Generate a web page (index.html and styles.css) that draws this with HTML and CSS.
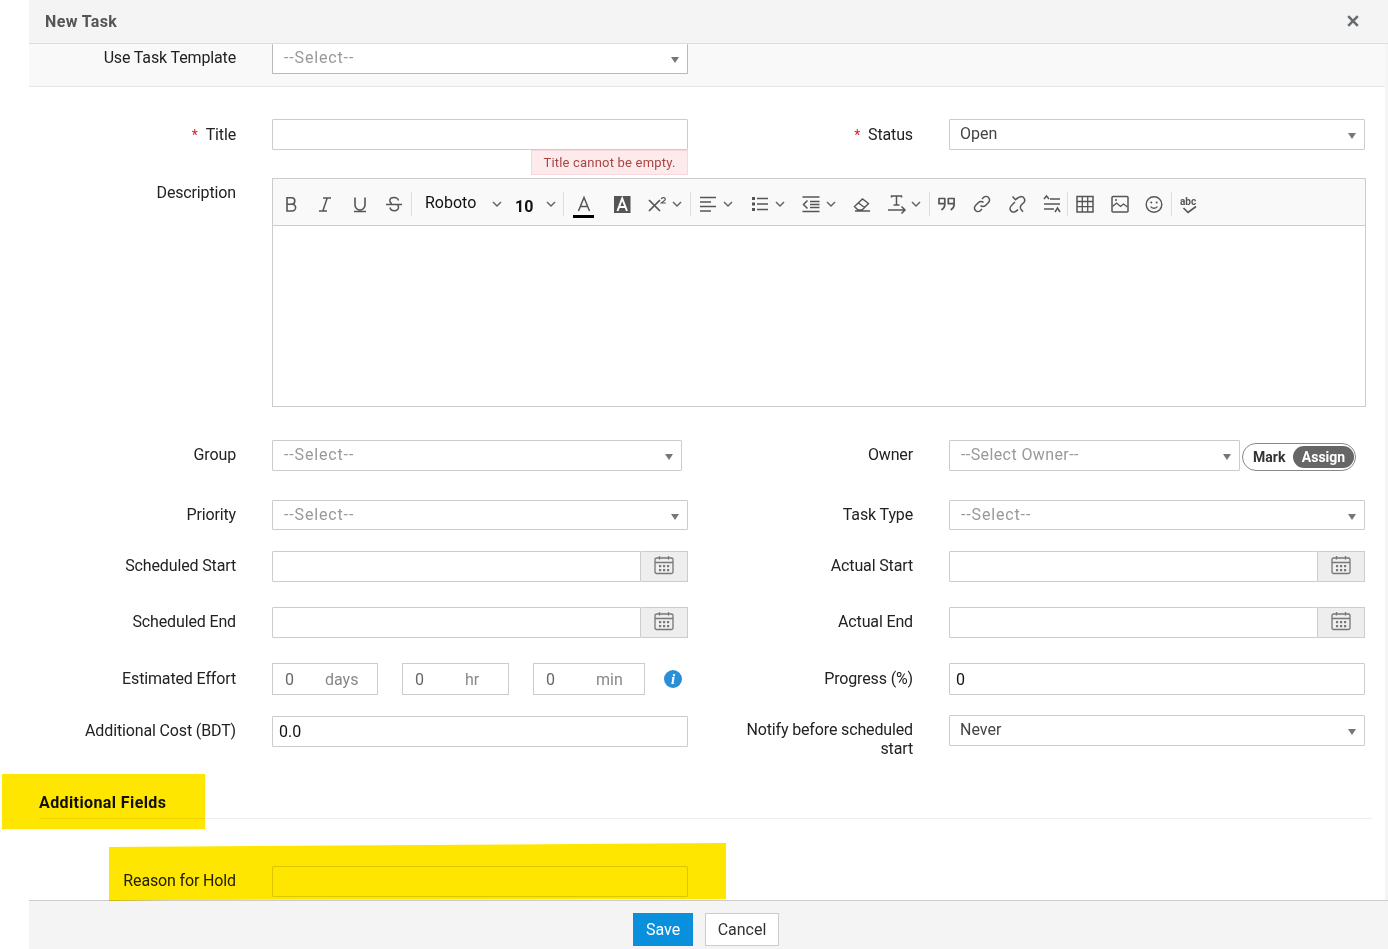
FILE: index.html
```html
<!DOCTYPE html>
<html lang="en">
<head>
<meta charset="utf-8">
<title>New Task</title>
<link rel="stylesheet" href="styles.css">
</head>
<body>
<svg class="defs" width="0" height="0" aria-hidden="true">
  <symbol id="chev" viewBox="0 0 10 10"><path d="M1 3l4 4 4-4" fill="none" stroke="#666" stroke-width="1.5"/></symbol>
  <symbol id="cal" viewBox="0 0 20 20"><g fill="none" stroke="#777" stroke-width="1.3"><rect x="1" y="3" width="18" height="15.5" rx="1.5"/><path d="M1 7.5h18M5.5 1v3.5M14.5 1v3.5"/></g><g fill="#777"><rect x="5" y="10" width="2.2" height="2.2"/><rect x="9" y="10" width="2.2" height="2.2"/><rect x="13" y="10" width="2.2" height="2.2"/><rect x="5" y="14" width="2.2" height="2.2"/><rect x="9" y="14" width="2.2" height="2.2"/><rect x="13" y="14" width="2.2" height="2.2"/></g></symbol>
</svg>
<div class="page">
  <div class="modal">
    <header class="head">
      <h1 class="head-title">New Task</h1>
      <svg class="close" width="12" height="12" viewBox="0 0 12 12"><path d="M1.2 1.2l9.6 9.6M10.8 1.2l-9.6 9.6" stroke="#666c70" stroke-width="2.6"/></svg>
    </header>
    <div class="body">
      <section class="template">
        <div class="row">
          <label class="lbl lbl-top">Use Task Template</label>
          <div class="select select-dark fld"><span class="ph">--Select--</span><i class="arrow"></i></div>
        </div>
      </section>

      <div class="row row-title">
        <label class="lbl lbl-low"><b class="req">*</b>Title</label>
        <div class="fld">
          <input class="input" type="text">
          <div class="error">Title cannot be empty.</div>
        </div>
        <label class="lbl lbl-r lbl-low"><b class="req">*</b>Status</label>
        <div class="select fld"><span class="val">Open</span><i class="arrow"></i></div>
      </div>

      <div class="row row-desc">
        <label class="lbl">Description</label>
        <div class="editor">
          <div class="toolbar">
            <span class="tool tool-first"><svg width="20" height="20" viewBox="0 0 20 20"><path d="M6 3.800h4.600a3.200 3.200 0 0 1 0 6.400H6zM6 10.200h5.200a3.400 3.400 0 0 1 0 6.800H6z" fill="none" stroke="#555" stroke-width="1.600"/></svg></span>
            <span class="tool"><svg width="20" height="20" viewBox="0 0 20 20"><path d="M8 4h8M4 17h8M12.200 4L7.800 17" fill="none" stroke="#555" stroke-width="1.500"/></svg></span>
            <span class="tool"><svg width="20" height="20" viewBox="0 0 20 20"><path d="M5 3.500v7.500a5 5 0 0 0 10 0V3.500M4 17.500h12" fill="none" stroke="#555" stroke-width="1.600"/></svg></span>
            <span class="tool"><svg width="20" height="20" viewBox="0 0 20 20"><path d="M14.500 6.500C14 4.500 12.300 3.500 10 3.500 7.500 3.500 5.800 4.800 5.800 6.700c0 1.200.7 2.200 2 2.800M6 13.500c.4 2 2 3.200 4.200 3.200 2.500 0 4.300-1.300 4.300-3.400 0-.9-.3-1.600-.9-2.300M2 10.500h16" fill="none" stroke="#555" stroke-width="1.500"/></svg></span>
            <i class="sep"></i>
            <span class="combo combo-font"><span>Roboto</span><svg class="chev" width="10" height="10"><use href="#chev"/></svg></span>
            <span class="combo combo-size"><b>10</b><svg class="chev" width="10" height="10"><use href="#chev"/></svg></span>
            <i class="sep"></i>
            <span class="tool tool-color"><svg width="20" height="20" viewBox="0 0 20 20"><path d="M4.500 17L10 3.500 15.500 17M6.500 12.500h7" fill="none" stroke="#555" stroke-width="1.500"/></svg><i class="swatch"></i></span>
            <span class="tool tool-bg"><svg width="20" height="20" viewBox="0 0 20 20"><rect x="2" y="2" width="16.500" height="17" fill="#555"/><path d="M5.500 17L10.200 4.500 15 17M7.200 13h6" fill="none" stroke="#fff" stroke-width="2"/></svg></span>
            <span class="split split-x"><svg width="20" height="20" viewBox="0 0 20 20"><path d="M2 6l11 11M13 6L2 17" fill="none" stroke="#555" stroke-width="1.700"/><path d="M14.300 5.200c.3-2 4-2 4 0 0 1.400-2.700 2.300-4 3.800h4.500" fill="none" stroke="#555" stroke-width="1.200"/></svg><svg class="chev" width="10" height="10"><use href="#chev"/></svg></span>
            <i class="sep"></i>
            <span class="split split-wide"><svg width="20" height="20" viewBox="0 0 20 20"><path d="M2 3.500h16M2 8h11M2 12.500h16M2 17h11" fill="none" stroke="#555" stroke-width="1.700"/></svg><svg class="chev" width="10" height="10"><use href="#chev"/></svg></span>
            <span class="split split-in"><svg width="20" height="20" viewBox="0 0 20 20"><path d="M7 4.500h11M7 10h11M7 15.500h11" fill="none" stroke="#555" stroke-width="1.500"/><path d="M2 3h3v3H2zM2 8.500h3v3H2zM2 14h3v3H2z" fill="#555"/></svg><svg class="chev" width="10" height="10"><use href="#chev"/></svg></span>
            <span class="split split-in"><svg width="20" height="20" viewBox="0 0 20 20"><path d="M1.500 3h17M1.500 17.500h17M9 7.500h9.500M9 10.500h9.500M9 13.500h9.500M6.500 6.500L2.500 10.500l4 4" fill="none" stroke="#555" stroke-width="1.500"/></svg><svg class="chev" width="10" height="10"><use href="#chev"/></svg></span>
            <span class="tool"><svg width="20" height="20" viewBox="0 0 20 20"><path d="M2.500 12.500L10.500 5l6 4.500-6.500 6.500H6zM6.500 9l6 4.500M3 17h15" fill="none" stroke="#555" stroke-width="1.400"/></svg></span>
            <span class="split split-t"><svg width="20" height="20" viewBox="0 0 20 20"><path d="M4.500 3.500V2h10v1.500M9.500 2v9M6.500 11h6M1 16h17M14.500 12.500L18 16l-3.500 3.500" fill="none" stroke="#555" stroke-width="1.500"/></svg><svg class="chev" width="10" height="10"><use href="#chev"/></svg></span>
            <i class="sep"></i>
            <span class="tool"><svg width="20" height="20" viewBox="0 0 20 20"><path d="M2 4.500h5.800v6c0 2.300-1 3.800-2.800 5M2 4.500v5.200h5.800M11.300 4.500h5.800v6c0 2.300-1 3.800-2.800 5M11.300 4.500v5.200h5.800" fill="none" stroke="#555" stroke-width="1.700" stroke-linejoin="round" stroke-linecap="round"/></svg></span>
            <span class="tool"><svg width="20" height="20" viewBox="0 0 20 20"><path d="M8.500 11.500a3.500 3.500 0 0 0 5 0l3-3a3.500 3.500 0 0 0-5-5l-1.500 1.500M11.500 8.500a3.500 3.500 0 0 0-5 0l-3 3a3.500 3.500 0 0 0 5 5l1.500-1.500" fill="none" stroke="#555" stroke-width="1.500"/></svg></span>
            <span class="tool tool-shift"><svg width="20" height="20" viewBox="0 0 20 20"><path d="M4.500 2.500l3 3.200c2.500-2.200 3.500-3.200 5.800-3.200 2.800 0 4.700 3.800 2.400 6.300l-2.200 2c-1 1-1.500 2.700-.6 4.300l2 2.700M7 8C4.500 10.500 2 11.800 2 14.500 2 17 4.200 18.500 6.500 18c1.500-.3 2.500-1.500 3.500-2.500" fill="none" stroke="#555" stroke-width="1.500"/></svg></span>
            <span class="tool tool-shift"><svg width="20" height="20" viewBox="0 0 20 20"><path d="M2 10h16M8 5h10M2 15h10M2 5l2.500-3L7 5M13 18l2.500-4 2.500 4" fill="none" stroke="#555" stroke-width="1.500"/></svg></span>
            <i class="sep"></i>
            <span class="tool"><svg width="20" height="20" viewBox="0 0 20 20"><rect x="2" y="2.500" width="16" height="15.500" fill="none" stroke="#555" stroke-width="1.500"/><path d="M2 7.500h16M2 12.700h16M7.300 2.500V18M12.700 2.500V18" fill="none" stroke="#555" stroke-width="1.300"/></svg></span>
            <span class="tool"><svg width="20" height="20" viewBox="0 0 20 20"><rect x="2" y="2.500" width="16" height="15.500" rx="1" fill="none" stroke="#555" stroke-width="1.500"/><path d="M2.500 12.500L6.500 9l4 3.500 3-2.500 4 3" fill="none" stroke="#555" stroke-width="1.300"/><circle cx="6" cy="6" r="1" fill="#555"/></svg></span>
            <span class="tool"><svg width="20" height="20" viewBox="0 0 20 20"><circle cx="10" cy="10.500" r="7.800" fill="none" stroke="#555" stroke-width="1.400"/><circle cx="7.300" cy="8.500" r="1" fill="#555"/><circle cx="12.700" cy="8.500" r="1" fill="#555"/><path d="M6.500 12.500c1.500 2.300 5.500 2.300 7 0" fill="none" stroke="#555" stroke-width="1.300"/></svg></span>
            <i class="sep"></i>
            <span class="tool"><span class="abc">abc</span><svg class="check" width="16" height="8" viewBox="0 0 16 8"><path d="M1.500 2L6 6.500 14 .5" fill="none" stroke="#555" stroke-width="1.700"/></svg></span>
          </div>
          <div class="editor-area"></div>
        </div>
      </div>

      <div class="row row-group">
        <label class="lbl">Group</label>
        <div class="select fld fld-short"><span class="ph">--Select--</span><i class="arrow"></i></div>
        <label class="lbl lbl-r lbl-r-short">Owner</label>
        <div class="select fld fld-owner"><span class="ph ph-long">--Select Owner--</span><i class="arrow"></i></div>
        <div class="toggle"><span class="toggle-off">Mark</span><span class="toggle-on">Assign</span></div>
      </div>

      <div class="row row-priority">
        <label class="lbl">Priority</label>
        <div class="select fld"><span class="ph">--Select--</span><i class="arrow"></i></div>
        <label class="lbl lbl-r">Task Type</label>
        <div class="select fld"><span class="ph">--Select--</span><i class="arrow"></i></div>
      </div>

      <div class="row row-date1">
        <label class="lbl">Scheduled Start</label>
        <div class="date fld"><span class="date-val"></span><span class="date-btn"><svg width="20" height="20"><use href="#cal"/></svg></span></div>
        <label class="lbl lbl-r">Actual Start</label>
        <div class="date fld"><span class="date-val"></span><span class="date-btn"><svg width="20" height="20"><use href="#cal"/></svg></span></div>
      </div>

      <div class="row row-date2">
        <label class="lbl">Scheduled End</label>
        <div class="date fld"><span class="date-val"></span><span class="date-btn"><svg width="20" height="20"><use href="#cal"/></svg></span></div>
        <label class="lbl lbl-r">Actual End</label>
        <div class="date fld"><span class="date-val"></span><span class="date-btn"><svg width="20" height="20"><use href="#cal"/></svg></span></div>
      </div>

      <div class="row row-effort">
        <label class="lbl lbl-low">Estimated Effort</label>
        <div class="effort fld">
          <div class="unit unit-days"><span class="unit-num">0</span><span class="unit-name">days</span></div>
          <div class="unit unit-hr"><span class="unit-num">0</span><span class="unit-name">hr</span></div>
          <div class="unit unit-min"><span class="unit-num">0</span><span class="unit-name">min</span></div>
          <span class="info">i</span>
        </div>
        <label class="lbl lbl-r lbl-low">Progress (%)</label>
        <input class="input input-val fld" type="text" value="0">
      </div>

      <div class="row row-cost">
        <label class="lbl lbl-cost">Additional Cost (BDT)</label>
        <input class="input input-val fld input-cost" type="text" value="0.0">
        <label class="lbl lbl-r lbl-notify">Notify before scheduled start</label>
        <div class="select fld select-never"><span class="val">Never</span><i class="arrow"></i></div>
      </div>

      <h2 class="section-head">Additional Fields</h2>

      <div class="row row-reason">
        <label class="lbl">Reason for Hold</label>
        <input class="input fld input-reason" type="text">
      </div>
    </div>
    <footer class="foot">
      <button class="btn btn-save" type="button">Save</button>
      <button class="btn btn-cancel" type="button">Cancel</button>
    </footer>
  </div>
  <div class="mark mark-heading"></div>
  <div class="mark mark-reason"></div>
</div>
</body>
</html>
```
FILE: styles.css
```css
* { box-sizing: border-box; }
html, body { margin: 0; height: 100%; background: #fff; overflow: hidden; }
body { font-family: Roboto, "Liberation Sans", sans-serif; font-size: 16px; color: #222; }
.defs { position: absolute; }
.page { position: relative; height: 949px; padding-left: 29px; }
.modal { display: flex; flex-direction: column; height: 949px; }

.head { flex: none; height: 44px; display: flex; align-items: center; justify-content: space-between; padding: 0 29px 2px 16px; background: #f4f4f4; border-bottom: 1px solid #ddd; }
.head-title { margin: 2px 0 0; font-size: 16px; font-weight: 700; color: #555; letter-spacing: .35px; }
.close { display: block; }

.body { flex: 1; min-height: 0; overflow: hidden; border-right: 3px solid #f5f5f5; }

.template { height: 43px; background: #f9f9f9; border-bottom: 1px solid #e6e6e6; }
.template .select { height: 30px; border-top: 0; }
.row { display: flex; align-items: flex-start; }
.lbl { flex: none; width: 243px; padding: 5px 36px 0 0; text-align: right; line-height: 19px; color: #222; letter-spacing: -.14px; }
.lbl-top { padding-top: 4px; }
.lbl-low { padding-top: 6px; }
.lbl-r { width: 261px; }
.lbl-notify { padding-left: 40px; }
.req { color: #e01b1b; font-weight: 400; font-size: 14px; margin-right: 8px; }
.fld { flex: none; width: 416px; }
.fld-short { width: 410px; }
.lbl-r-short { width: 267px; }
.fld-owner { width: 291px; }

.input, .select, .date-val { border: 1px solid #ccc; background: #fff; border-radius: 1px; }
.input { display: block; height: 31px; padding: 0 6px; width: 416px; font: 16px Roboto, "Liberation Sans", sans-serif; color: #111; outline: 0; }
.input-reason { border-color: #dcdcdc; }
.select { height: 31px; display: flex; align-items: center; justify-content: space-between; padding: 0 8px 0 10px; color: #444; }
.select-dark { border-color: #bbb; }
.ph { color: #999; letter-spacing: .85px; padding: 0 0 2px 1px; }
.ph-long { letter-spacing: .4px; }
.val { color: #444; padding-bottom: 2px; }
.arrow { width: 0; height: 0; margin-top: 3px; border-left: 4.500px solid transparent; border-right: 4.500px solid transparent; border-top: 6px solid #777; }

.error { width: 157px; height: 25px; margin-left: auto; background: #fdeaec; border: 1px solid #f8d7da; color: #a94442; font-size: 13px; line-height: 23px; text-align: center; letter-spacing: .2px; }

.row-title { margin-top: 32px; }
.row-desc { margin-top: 3px; }
.editor { width: 1094px; height: 229px; border: 1px solid #ccc; }
.toolbar { display: flex; align-items: center; height: 47px; padding: 4px 0 0 1px; background: #f9f9f9; border-bottom: 1px solid #ccc; }
.editor-area { height: 180px; background: #fff; }
.tool { position: relative; flex: none; display: flex; align-items: center; justify-content: center; width: 34.250px; height: 24px; }
.tool svg, .split svg { display: block; flex: none; }
.tool-shift svg { transform: translateX(2px); }
.sep { flex: none; width: 1px; height: 24px; background: #ddd; }
.combo { flex: none; display: flex; align-items: center; height: 24px; color: #111; }
.combo-font { width: 93px; padding-left: 13px; }
.combo-font span { width: 67px; position: relative; top: -2px; }
.combo-size { width: 58px; padding-left: 10px; }
.combo-size b { width: 31px; font-weight: 700; position: relative; top: 2px; }
.tool-color { width: 38px; margin-left: 1px; }
.tool-bg { width: 37px; }
.swatch { position: absolute; left: 8px; top: 23px; width: 21px; height: 3px; background: #000; }
.split { flex: none; display: flex; align-items: center; width: 51px; height: 24px; padding-left: 6px; }
.split .chev { margin-left: 6px; }
.split-x { padding-left: 7px; width: 50px; }
.split-x .chev { margin-left: 5px; }
.split-wide { width: 52px; padding-left: 7px; }
.split-wide .chev { margin-left: 5px; }
.split-in { padding-left: 7px; }
.split-in .chev { margin-left: 5px; }
.split-t { width: 50px; padding-left: 8px; }
.split-t .chev { margin-left: 4px; }
.abc { position: absolute; left: 8px; top: 4px; font-size: 10px; font-weight: 700; color: #555; line-height: 11px; }
.check { position: absolute; left: 10px; top: 14px; }

.row-group { margin-top: 33px; }
.row-priority { margin-top: 29px; }
.row-priority .select { height: 30px; }
.row-date1 { margin-top: 21px; }
.row-date2 { margin-top: 25px; }
.date { display: flex; height: 31px; }
.date-val { flex: 1; border-radius: 1px 0 0 1px; }
.date-btn { flex: none; display: flex; align-items: center; justify-content: center; width: 47px; background: #eee; border: 1px solid #ccc; border-left: 0; }
.date-btn svg { margin-top: -3px; }

.toggle { flex: none; display: flex; align-items: center; justify-content: space-between; width: 114px; height: 28px; margin: 3px 0 0 2px; padding: 0 1px 0 10px; border: 1px solid #888; border-radius: 14px; background: #fff; font-size: 14px; font-weight: 700; }
.toggle-off { color: #333; }
.toggle-on { height: 22px; width: 61px; text-align: center; line-height: 22px; border-radius: 11px; background: #666; color: #fff; }

.row-effort { margin-top: 25px; }
.effort { display: flex; align-items: center; height: 32px; }
.unit { flex: none; display: flex; align-items: center; height: 32px; border: 1px solid #ccc; color: #888; }
.unit-num { flex: none; padding-left: 12px; color: #666; }
.unit-days { width: 106px; margin-right: 24px; }
.unit-days .unit-name { margin-left: 31px; }
.unit-hr { width: 107px; margin-right: 24px; }
.unit-hr .unit-name { margin-left: 41px; }
.unit-min { width: 112px; }
.unit-min .unit-name { margin-left: 41px; }
.info { flex: none; width: 18px; height: 18px; margin-left: 19px; border-radius: 50%; background: #2a8fd6; color: #fff; text-align: center; font: italic 700 15px/18px "Liberation Serif", serif; }
.input-val { font-size: 16px; }
.row-effort .input { height: 32px; }

.row-cost { margin-top: 20px; height: 47px; }
.lbl-cost { padding-top: 6px; }
.input-cost { margin-top: 1px; }
.select-never { height: 31px; }

.section-head { width: 1333px; height: 29px; margin: 28px 0 0 10px; padding-top: 1px; border-bottom: 1px solid #eee; font-size: 16px; font-weight: 700; line-height: 24px; color: #111; letter-spacing: .4px; }

.row-reason { margin-top: 47px; }

.foot { flex: none; display: flex; align-items: flex-start; justify-content: center; gap: 12px; height: 49px; padding: 12px 5px 0 0; background: #f4f4f4; border-top: 1px solid #ccc; }
.btn { height: 33px; padding: 0; font: 16px Roboto, "Liberation Sans", sans-serif; border-radius: 0; }
.btn-save { width: 60px; background: #0a8fdc; border: 1px solid #0a8fdc; color: #fff; }
.btn-cancel { width: 74px; background: #fff; border: 1px solid #ccc; color: #333; }

.mark { position: absolute; background: #ffe600; mix-blend-mode: multiply; pointer-events: none; }
.mark-heading { left: 2px; top: 774px; width: 203px; height: 55px; }
.mark-reason { left: 109px; top: 843px; width: 617px; height: 58px; clip-path: polygon(0 4px, 100% 0, 100% 56px, 60px 57px, 0 100%); }
```
